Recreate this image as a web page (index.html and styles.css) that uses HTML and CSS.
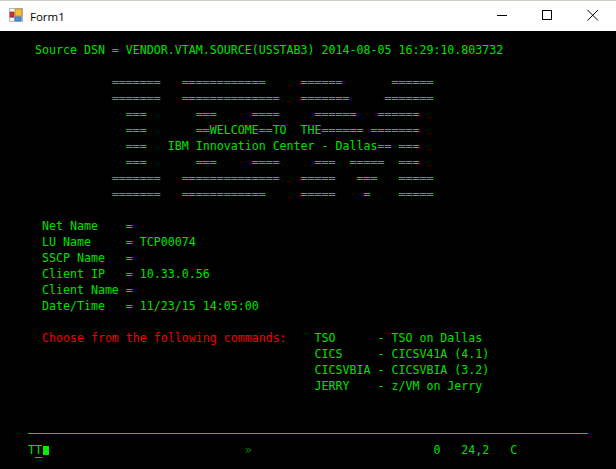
FILE: index.html
```html
<!DOCTYPE html>
<html lang="en">
<head>
<meta charset="utf-8">
<title>Form1</title>
<link rel="stylesheet" href="styles.css">
</head>
<body>
<div class="window">
  <header class="titlebar">
    <svg class="app-icon" viewBox="0 0 14 14" width="14" height="14" aria-hidden="true">
      <rect x="0" y="0" width="14" height="14" fill="#b9b9b9"/>
      <rect x="1" y="1" width="5" height="3" fill="#f2f2f2"/>
      <rect x="1" y="4" width="4" height="5" fill="#d8332b" stroke="#8d1f1a" stroke-width=".6"/>
      <rect x="1" y="10" width="4" height="3" fill="#f2f2f2"/>
      <rect x="6" y="1" width="7" height="7" fill="#f3bd3f" stroke="#b8862a" stroke-width=".7"/>
      <rect x="6" y="9" width="6" height="4" fill="#4f8fdc" stroke="#2f65ad" stroke-width=".6"/>
    </svg>
    <span class="title">Form1</span>
    <div class="controls">
      <svg class="ctl" viewBox="0 0 46 30" width="46" height="30" aria-hidden="true"><path d="M19 14.5h10" stroke="#000" fill="none"/></svg>
      <svg class="ctl" viewBox="0 0 46 30" width="46" height="30" aria-hidden="true"><rect x="18.5" y="9.5" width="9" height="9" stroke="#000" fill="none"/></svg>
      <svg class="ctl" viewBox="0 0 46 30" width="46" height="30" aria-hidden="true"><path d="M17.5 9l10.5 10.5M28 9l-10.5 10.5" stroke="#000" fill="none"/></svg>
    </div>
  </header>
  <main class="terminal">
    <div class="screen">
<pre> Source DSN = VENDOR.VTAM.SOURCE(USSTAB3) 2014-08-05 16:29:10.803732

            =======   ============     ======       ======
            =======   ==============   =======     =======
              ===       ===     ====     ======   ======
              ===       ==WELCOME==TO  THE====== =======
              ===   IBM Innovation Center - Dallas== ===
              ===       ===     ====     ===  =====  ===
            =======   ==============   =====   ===   =====
            =======   ============     =====    =    =====

  Net Name    =
  LU Name     = TCP00074
  SSCP Name   =
  Client IP   = 10.33.0.56
  Client Name =
  Date/Time   = 11/23/15 14:05:00
</pre>
      <div class="menu">
<pre class="red">  Choose from the following commands:</pre>
<pre>TSO      - TSO on Dallas
CICS     - CICSV41A (4.1)
CICSVBIA - CICSVBIA (3.2)
JERRY    - z/VM on Jerry</pre>
      </div>
    </div>
    <div class="oia">
      <pre class="keys">T<span class="under">T</span><span class="cursor"></span></pre>
      <pre class="dim">»</pre>
      <pre class="count">0</pre>
      <pre class="pos">24,2</pre>
      <pre class="mode">C</pre>
    </div>
  </main>
</div>
</body>
</html>
```
FILE: styles.css
```css
html, body {
  margin: 0;
  padding: 0;
  background: #000;
}
.window {
  width: 616px;
  height: 469px;
  display: flex;
  flex-direction: column;
  overflow: hidden;
}
.titlebar {
  height: 30px;
  flex: none;
  display: flex;
  align-items: center;
  background: #fff;
  border-top: 1px solid #c9d1c2;
  padding-left: 9px;
}
.app-icon {
  flex: none;
  margin-bottom: 2px;
}
.title {
  margin-left: 7px;
  font: 11.5px "Open Sans", "Noto Sans", sans-serif;
  color: #000;
}
.controls {
  margin-left: auto;
  display: flex;
  align-self: flex-start;
}
.ctl {
  display: block;
  width: 46px;
  height: 30px;
}
.terminal {
  flex: 1;
  background: #000;
  padding: 11px 28px 0;
  display: flex;
  flex-direction: column;
}
pre {
  margin: 0;
  font: 11.628px/16px "DejaVu Sans Mono", "Liberation Mono", monospace;
  color: #00e000;
}
.screen {
  height: 353px;
}
.menu {
  display: grid;
  grid-template-columns: 41ch 1fr;
  font: 11.628px/16px "DejaVu Sans Mono", "Liberation Mono", monospace;
  margin-top: 16px;
}
.red {
  color: #f00000;
}
.oia {
  width: 560px;
  margin-top: 38px;
  border-top: 1px solid #00e000;
  padding-top: 8px;
  display: grid;
  grid-template-columns: 31ch 27ch 4ch 7ch auto;
  font: 11.628px/16px "DejaVu Sans Mono", "Liberation Mono", monospace;
}
.under {
  text-decoration: underline;
  text-underline-offset: 3px;
}
.cursor {
  display: inline-block;
  width: 6px;
  height: 9px;
  margin-left: 1px;
  background: #00f000;
  vertical-align: -1px;
}
.dim {
  color: #008a00;
}
```
